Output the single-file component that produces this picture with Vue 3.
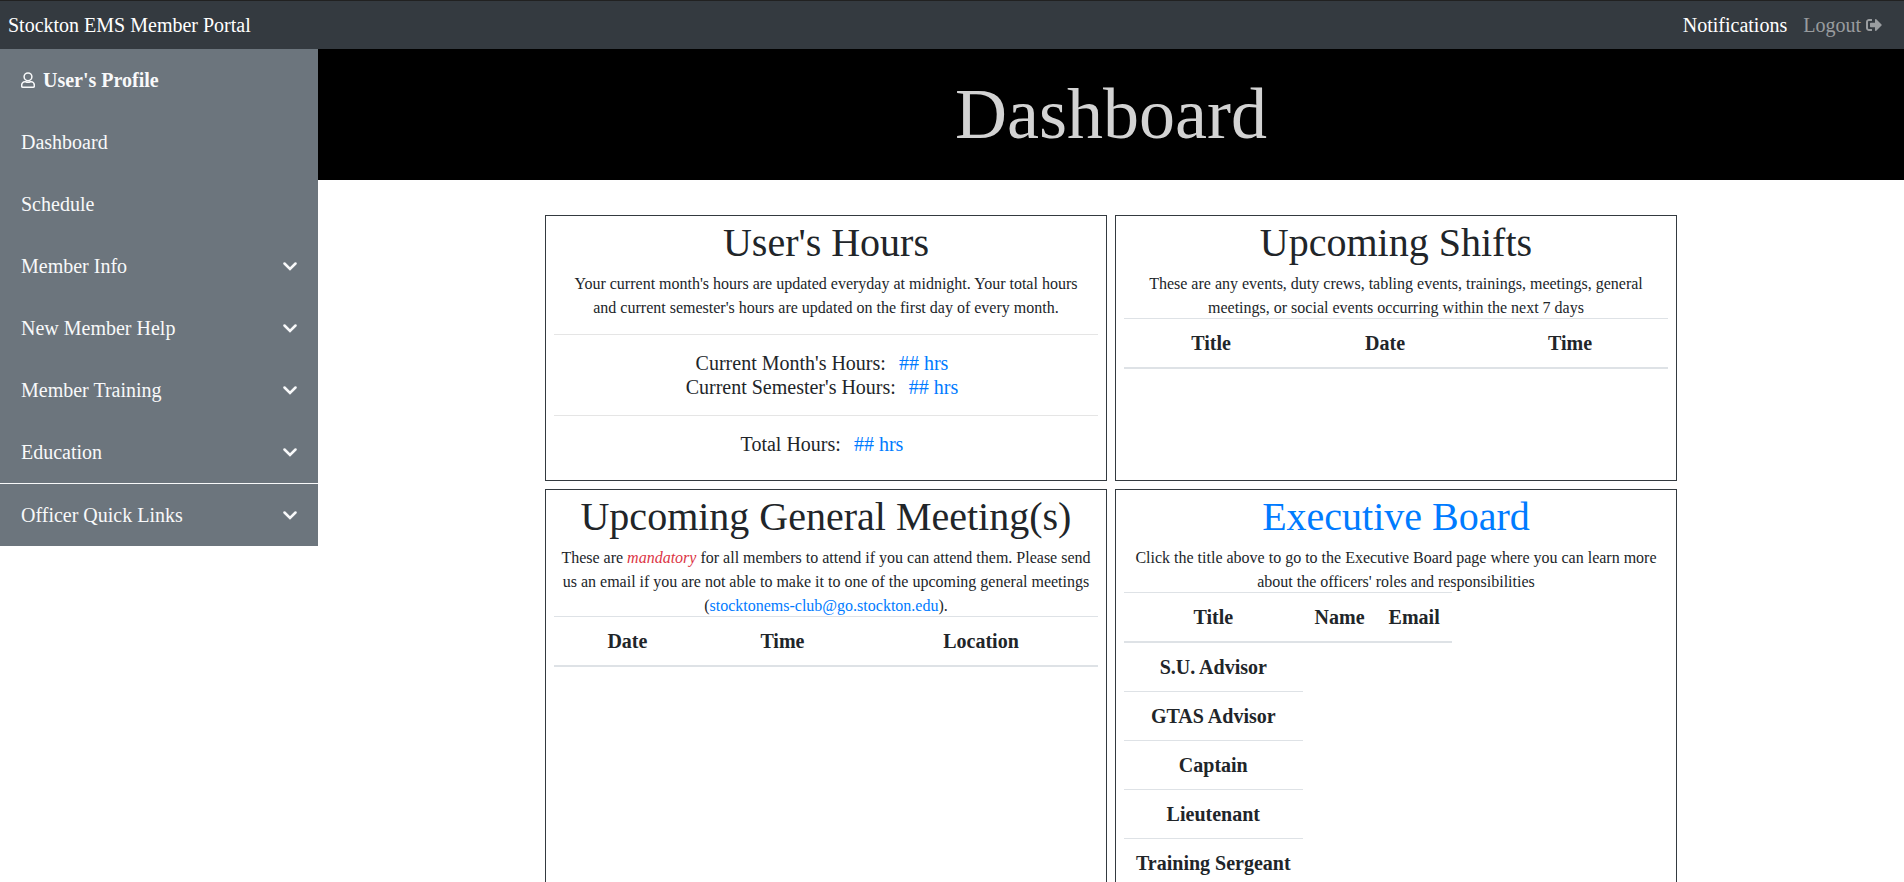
<script setup>
const menu = [
  { label: "Dashboard" },
  { label: "Schedule" },
  { label: "Member Info", expandable: true },
  { label: "New Member Help", expandable: true },
  { label: "Member Training", expandable: true },
  { label: "Education", expandable: true },
  { label: "Officer Quick Links", expandable: true, divided: true },
];

const board = [
  "S.U. Advisor",
  "GTAS Advisor",
  "Captain",
  "Lieutenant",
  "Training Sergeant",
];
</script>

<template>
  <div class="portal">
    <header class="topbar">
      <a class="brand" href="#">Stockton EMS Member Portal</a>
      <nav class="topnav" aria-label="Account">
        <a class="notifications" href="#">Notifications</a>
        <a class="logout" href="#">
          Logout
          <svg class="logout-icon" viewBox="0 0 512 512" aria-hidden="true">
            <path d="M497 273L329 441c-15 15-41 4.500-41-17v-96H152c-13.300 0-24-10.700-24-24v-96c0-13.300 10.700-24 24-24h136V88c0-21.400 25.900-32 41-17l168 168c9.300 9.400 9.300 24.600 0 34zM192 436v-40c0-6.600-5.400-12-12-12H96c-17.700 0-32-14.300-32-32V160c0-17.700 14.300-32 32-32h84c6.600 0 12-5.400 12-12V76c0-6.600-5.400-12-12-12H96c-53 0-96 43-96 96v192c0 53 43 96 96 96h84c6.600 0 12-5.400 12-12z" />
          </svg>
        </a>
      </nav>
    </header>

    <div class="body">
      <nav class="sidebar" aria-label="Main">
        <a class="item profile" href="#">
          <svg class="user-icon" viewBox="0 0 14 16" aria-hidden="true">
            <circle cx="7" cy="4.800" r="3.900" />
            <path d="M3.800 9.800h.8a5.600 5.600 0 0 0 4.800 0h.8a3.100 3.100 0 0 1 3.100 3.100v1.200a1.100 1.100 0 0 1-1.100 1.100H1.800a1.100 1.100 0 0 1-1.100-1.100v-1.200a3.100 3.100 0 0 1 3.100-3.100z" />
          </svg>
          User's Profile
        </a>
        <template v-for="entry in menu" :key="entry.label">
          <button
            v-if="entry.expandable"
            type="button"
            class="item"
            :class="{ divided: entry.divided }"
          >
            <span>{{ entry.label }}</span>
            <svg class="chevron" viewBox="0 0 14 9" aria-hidden="true">
              <path d="M1.500 1.500L7 7l5.500-5.500" />
            </svg>
          </button>
          <a v-else class="item" href="#">{{ entry.label }}</a>
        </template>
      </nav>

      <main class="main">
        <div class="banner">
          <h1>Dashboard</h1>
        </div>

        <div class="cards">
          <section class="card">
            <h2>User's Hours</h2>
            <p>
              <small>
                Your current month's hours are updated everyday at midnight. Your total hours<br />
                and current semester's hours are updated on the first day of every month.
              </small>
            </p>
            <hr />
            <p>Current Month's Hours: <a class="hours" href="#">## hrs</a></p>
            <p>Current Semester's Hours: <a class="hours" href="#">## hrs</a></p>
            <hr />
            <p class="total">Total Hours: <a class="hours" href="#">## hrs</a></p>
          </section>

          <section class="card">
            <h2>Upcoming Shifts</h2>
            <p>
              <small>
                These are any events, duty crews, tabling events, trainings, meetings, general
                meetings, or social events occurring within the next 7 days
              </small>
            </p>
            <table class="wide shifts">
              <thead>
                <tr>
                  <th scope="col">Title</th>
                  <th scope="col">Date</th>
                  <th scope="col">Time</th>
                </tr>
              </thead>
            </table>
          </section>

          <section class="card">
            <h2>Upcoming General Meeting(s)</h2>
            <p>
              <small>
                These are <em>mandatory</em> for all members to attend if you can attend them. Please send
                us an email if you are not able to make it to one of the upcoming general meetings
                (<a href="mailto:stocktonems-club@go.stockton.edu">stocktonems-club@go.stockton.edu</a>).
              </small>
            </p>
            <table class="wide meetings">
              <thead>
                <tr>
                  <th scope="col">Date</th>
                  <th scope="col">Time</th>
                  <th scope="col">Location</th>
                </tr>
              </thead>
            </table>
          </section>

          <section class="card">
            <h2><a href="#">Executive Board</a></h2>
            <p>
              <small>
                Click the title above to go to the Executive Board page where you can learn more
                about the officers' roles and responsibilities
              </small>
            </p>
            <table>
              <thead>
                <tr>
                  <th scope="col">Title</th>
                  <th scope="col">Name</th>
                  <th scope="col">Email</th>
                </tr>
              </thead>
              <tbody>
                <tr v-for="role in board" :key="role">
                  <th scope="row">{{ role }}</th>
                </tr>
              </tbody>
            </table>
          </section>
        </div>
      </main>
    </div>
  </div>
</template>

<style>
body {
  margin: 0;
  background: #fff;
}
</style>

<style scoped>
.portal {
  font-family: "Liberation Serif", "Times New Roman", serif;
  font-size: 20px;
  line-height: 24px;
  color: #212529;
}
.portal * {
  box-sizing: border-box;
}
a {
  color: #007bff;
  text-decoration: none;
}
.topbar {
  display: flex;
  align-items: center;
  justify-content: space-between;
  padding: 12px 22px 12px 8px;
  border-top: 1px solid #212121;
  background: #343a40;
}
.brand,
.notifications {
  color: #fff;
}
.topnav {
  display: flex;
  gap: 16px;
}
.logout {
  display: flex;
  align-items: center;
  gap: 5px;
  color: rgba(255, 255, 255, 0.5);
}
.logout-icon {
  width: 16px;
  height: 16px;
  fill: currentColor;
}
.body {
  display: flex;
  align-items: flex-start;
}
.sidebar {
  flex: 0 0 auto;
  width: 16.7%;
  background: #6c757d;
}
.item {
  display: flex;
  align-items: center;
  justify-content: space-between;
  width: 100%;
  padding: 19px 21px;
  border: 0;
  background: none;
  font: inherit;
  color: #f8f9fa;
  text-align: left;
}
.profile {
  justify-content: flex-start;
  gap: 8px;
  font-weight: bold;
}
.divided {
  border-top: 1px solid #f8f9fa;
}
.user-icon {
  width: 14px;
  height: 16px;
  fill: none;
  stroke: currentColor;
  stroke-width: 1.5;
}
.chevron {
  width: 14px;
  height: 9px;
  fill: none;
  stroke: currentColor;
  stroke-width: 2.5;
  stroke-linecap: round;
}
.main {
  flex: 1;
  min-width: 0;
}
.banner {
  padding: 32px 16px;
  background: #000;
  text-align: center;
}
h1 {
  margin: 0;
  font-size: 72px;
  line-height: 67px;
  font-weight: normal;
  color: #d3d3d3;
}
.cards {
  display: grid;
  grid-template-columns: 1fr 1fr;
  gap: 8px;
  max-width: 1132px;
  margin: 35px auto 0;
}
.card {
  padding: 8px;
  border: 1px solid #343a40;
  text-align: center;
}
h2 {
  margin: 0 0 8px;
  font-size: 40px;
  line-height: 38px;
  font-weight: normal;
}
p {
  margin: 0;
}
small {
  font-size: 16px;
  line-height: 16px;
}
em {
  color: #dc3545;
}
hr {
  margin: 16px 0;
  border: 0;
  border-top: 1px solid rgba(0, 0, 0, 0.1);
}
.hours {
  padding: 0 8px;
}
.total {
  margin-bottom: 16px;
}
table {
  border-collapse: separate;
  border-spacing: 0;
}
th {
  padding: 12px;
  border-top: 1px solid #dee2e6;
}
thead th {
  border-bottom: 2px solid #dee2e6;
}
tbody tr:first-child th {
  border-top: 0;
}
.wide {
  width: 100%;
  table-layout: fixed;
}
.shifts th {
  width: 32%;
}
.shifts th:last-child {
  width: 36%;
}
.meetings th {
  width: 27%;
}
.meetings th:nth-child(2) {
  width: 30%;
}
.meetings th:last-child {
  width: 43%;
}
</style>
